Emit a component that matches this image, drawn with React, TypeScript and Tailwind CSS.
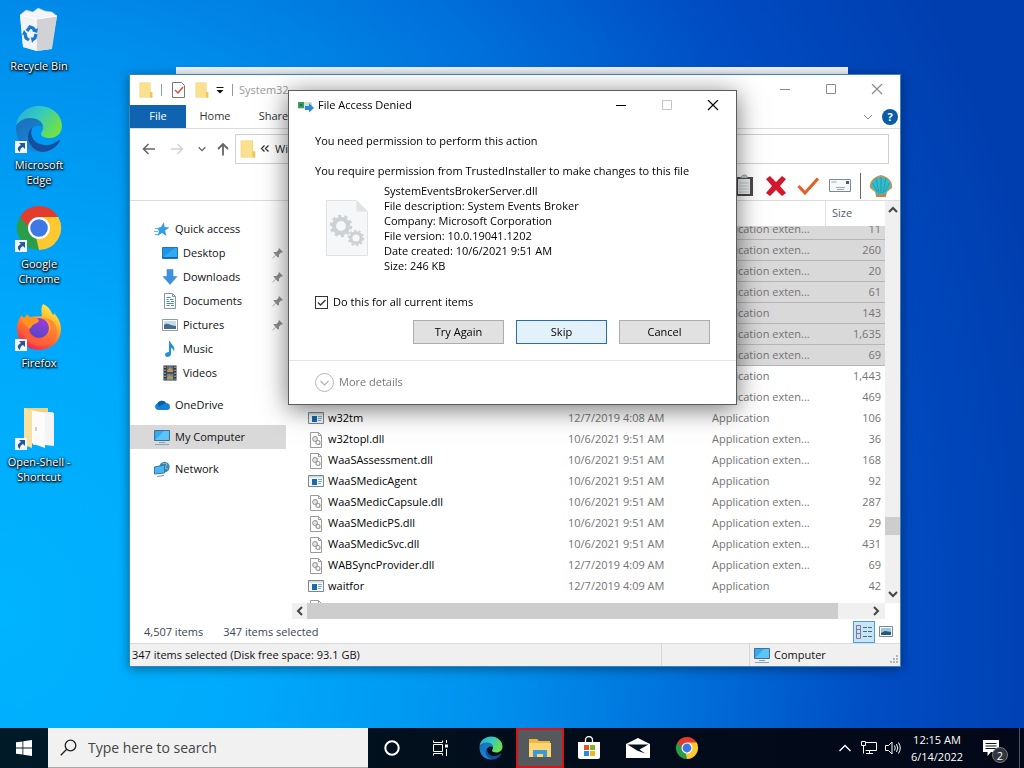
import { useLayoutEffect, useRef } from 'react'
import type { ReactNode } from 'react'

type FileRow = {
  name?: string
  date?: string
  type: string
  size: string
  selected?: boolean
}

const EXT = 'Application exten...'
const APP = 'Application'

const FILES: FileRow[] = [
  { type: EXT, size: '11', selected: true },
  { type: EXT, size: '260', selected: true },
  { type: EXT, size: '20', selected: true },
  { type: EXT, size: '61', selected: true },
  { type: APP, size: '143', selected: true },
  { type: EXT, size: '1,635', selected: true },
  { type: EXT, size: '69', selected: true },
  { type: APP, size: '1,443' },
  { type: EXT, size: '469' },
  { name: 'w32tm', date: '12/7/2019 4:08 AM', type: APP, size: '106' },
  { name: 'w32topl.dll', date: '10/6/2021 9:51 AM', type: EXT, size: '36' },
  { name: 'WaaSAssessment.dll', date: '10/6/2021 9:51 AM', type: EXT, size: '168' },
  { name: 'WaaSMedicAgent', date: '10/6/2021 9:51 AM', type: APP, size: '92' },
  { name: 'WaaSMedicCapsule.dll', date: '10/6/2021 9:51 AM', type: EXT, size: '287' },
  { name: 'WaaSMedicPS.dll', date: '10/6/2021 9:51 AM', type: EXT, size: '29' },
  { name: 'WaaSMedicSvc.dll', date: '10/6/2021 9:51 AM', type: EXT, size: '431' },
  { name: 'WABSyncProvider.dll', date: '12/7/2019 4:09 AM', type: EXT, size: '69' },
  { name: 'waitfor', date: '12/7/2019 4:09 AM', type: APP, size: '42' },
  { name: 'WalletBackgroundServiceProxy.dll', date: '12/7/2019 4:08 AM', type: EXT, size: '13' },
]

const DETAILS = [
  'SystemEventsBrokerServer.dll',
  'File description: System Events Broker',
  'Company: Microsoft Corporation',
  'File version: 10.0.19041.1202',
  'Date created: 10/6/2021 9:51 AM',
  'Size: 246 KB',
]

/* ---------- logos ---------- */

function EdgeLogo({ className, id }: { className: string; id: string }) {
  return (
    <svg viewBox="0 0 48 48" className={className} aria-hidden="true">
      <defs>
        <linearGradient id={id + 'a'} x1="0" y1="0" x2="1" y2="0.5">
          <stop offset="0" stopColor="#27a9dd" />
          <stop offset="0.5" stopColor="#33c9c0" />
          <stop offset="1" stopColor="#6fe04a" />
        </linearGradient>
        <linearGradient id={id + 'b'} x1="0" y1="0" x2="0.6" y2="1">
          <stop offset="0" stopColor="#1b6fb8" />
          <stop offset="1" stopColor="#1487dd" />
        </linearGradient>
      </defs>
      <path d="M1 20C3 8 13 1 24 1c13 0 23 9 23 20 0 7-5 12-12 12-6 0-9-2-9-4 0-1.500 2-2.500 2-6 0-5-5-9-12-9-6 0-12 2-15 6z" fill={`url(#${id}a)`} />
      <path d="M1 21c3-5 8-8 14-8 8 0 13 4 13 9-5-3-12 0-13 6-2 8 5 16 12 18-2 1-4 1-5 1C10 46 0 36 1 21z" fill={`url(#${id}b)`} />
      <path d="M17 23c-3 9 3 16 12 17 6 1 11-2 15-5 1-.5 1.500 0 1 1-4 7-11 11-18 11-8-1-14-8-14-15 0-4 1-7 4-9z" fill="#15509e" />
    </svg>
  )
}

function ChromeLogo({ className }: { className: string }) {
  return (
    <svg viewBox="0 0 48 48" className={className} aria-hidden="true">
      <path d="M24 24 4.900 13A22 22 0 0 1 43.100 13z" fill="#e33b2e" />
      <path d="M24 24 43.100 13A22 22 0 0 1 24 46z" fill="#fcc931" />
      <path d="M24 24v22A22 22 0 0 1 4.900 13z" fill="#2a9d4a" />
      <path d="M24 13h19.100a22 22 0 0 1 2 5L31 19z" fill="#fcc931" />
      <path d="M4.900 13 14.500 29.500 22 17z" fill="#2a9d4a" />
      <path d="M4.900 13 24 13l-5 5-5 5z" fill="#e33b2e" />
      <path d="M33.500 29.500 24 46l-3-13z" fill="#fcc931" />
      <circle cx="24" cy="24" r="11" fill="#fff" />
      <circle cx="24" cy="24" r="8.800" fill="#3c79e6" />
    </svg>
  )
}

function FirefoxLogo() {
  return (
    <svg viewBox="0 0 48 48" className="size-12" aria-hidden="true">
      <defs>
        <linearGradient id="fx" x1="0.800" y1="0" x2="0.300" y2="1">
          <stop offset="0" stopColor="#fff04a" />
          <stop offset="0.350" stopColor="#ffb52b" />
          <stop offset="0.650" stopColor="#ff6a2c" />
          <stop offset="1" stopColor="#ee2558" />
        </linearGradient>
        <linearGradient id="fxp" x1="0.700" y1="0" x2="0.300" y2="1">
          <stop offset="0" stopColor="#a03bd8" />
          <stop offset="1" stopColor="#5147c9" />
        </linearGradient>
      </defs>
      <path d="M28 1c7 3 8 8 10 11 1-1 1-1 1-2 5 5 7 11 7 16 0 12-10 21-22 21S2 38 2 26c0-6 2-11 5-14l1 4c1-1 3-2 4-5 1 2 2 3 4 3 4-1 8 0 11-1-1-5-1-9 1-12z" fill="url(#fx)" />
      <circle cx="24" cy="25" r="10" fill="url(#fxp)" />
      <path d="M7 14c2 1 5 0 9 0 4-1 7 2 8 4-2 3-4 2-6 4s-2 3-4 4c-3-5-8-5-7-12z" fill="#ff9326" />
      <path d="M12 25c0 10 12 15 20 8 4-4 4-8 3-11-1-3-3-5-7-6 7-2 14 4 14 12 0 9-8 15-17 15S8 36 8 28z" fill="#ff6a3a" opacity=".55" />
    </svg>
  )
}

function RecycleBin() {
  return (
    <svg viewBox="0 0 48 48" className="size-12" aria-hidden="true">
      <path d="m5 9 6-5 7 2 5-4 7 3 7 1 5 4-4 3H9z" fill="#f2f4f6" stroke="#b8c4cc" strokeWidth=".6" />
      <path d="m5 9 14 4 23-3-6 33-14 2-14-4z" fill="#dfe3e6" />
      <path d="m5 9 17 4v32L8 41z" fill="#f1f3f4" />
      <path d="m22 13 20-3-5 33-15 2z" fill="#d0d2d5" />
      <path d="m5 9 17 4 20-3" fill="none" stroke="#fff" strokeWidth="1.200" />
      <g fill="none" stroke="#1679d0" strokeWidth="3.200">
        <path d="m12 25 3-4 3 1 2 3" />
        <path d="m21 28-1 4-3 2" />
        <path d="m14 34-3-2-1-4" />
      </g>
      <path d="m17 25 5 2 1-5zM16 31l1 6 3-4zM7 29l5-1-3-4z" fill="#1679d0" />
    </svg>
  )
}

function OpenFolder() {
  return (
    <svg viewBox="0 0 48 48" className="size-12" aria-hidden="true">
      <path d="M9 6h24v35H9z" fill="#ecd384" />
      <path d="M18 10h20v33H18z" fill="#e9eaea" />
      <path d="m16 8 14 3v35l-14-5z" fill="#fbfbfb" />
      <path d="m9 6 8 3v37l-8-3z" fill="#f7e1a0" />
      <path d="m30 11 9 0v33l-9-1z" fill="#f4f4f4" />
      <path d="M21 25v4" stroke="#b9c0c5" strokeWidth="1.500" />
    </svg>
  )
}

function ShortcutArrow() {
  return (
    <svg viewBox="0 0 12 12" className="absolute bottom-0 left-0 size-3" aria-hidden="true">
      <path d="M0 0h12v12H0z" fill="#f4f7fa" />
      <path d="M4 2h6v6L8 6C6 7 5 8 5 11 2 9 2 6 6 4z" fill="#24579b" />
    </svg>
  )
}

/* ---------- small icons ---------- */

function Folder({ className = 'size-4' }: { className?: string }) {
  return (
    <svg viewBox="0 0 16 16" className={className} aria-hidden="true">
      <path d="M1.500.5h11v13h1.500v2H1.500z" fill="#f0cf6d" />
      <path d="M2 1h10v14H2z" fill="#fbe08f" />
      <path d="M12 10h2.500v5.500H12z" fill="#eec75a" />
    </svg>
  )
}

function Monitor() {
  return (
    <svg viewBox="0 0 16 16" className="size-4" aria-hidden="true">
      <path d="M.5 1.500h15v10H.5z" fill="#35a9ee" stroke="#3f6f96" />
      <path d="m1 11 9-9h5v9z" fill="#5dc4fa" />
      <path d="M5 13.500h6M1 15.500h14" stroke="#8ba2b3" />
    </svg>
  )
}

function DllIcon() {
  return (
    <svg viewBox="0 0 16 16" className="size-4" aria-hidden="true">
      <path d="M2.500.5h8l3 3v12h-11z" fill="#fff" stroke="#9a9a9a" />
      <path d="M10.500.5v3h3" fill="none" stroke="#9a9a9a" />
      <circle cx="7" cy="7" r="2.300" fill="none" stroke="#9b9b9b" strokeWidth="1.200" />
      <circle cx="7" cy="7" r=".6" fill="#888" />
      <circle cx="10" cy="10.500" r="2" fill="none" stroke="#9b9b9b" strokeWidth="1.200" />
    </svg>
  )
}

function AppIcon() {
  return (
    <svg viewBox="0 0 16 16" className="size-4" aria-hidden="true">
      <path d="M.5 1.500h15v11H.5z" fill="#f4f9fc" stroke="#7d868d" />
      <path d="M1 2h14v1.500H1z" fill="#cfd9df" />
      <path d="M4 5h5v6H4z" fill="#1769b0" />
      <path d="M10 5.500h4M10 7.500h4M10 9.500h3" stroke="#86a7bf" />
    </svg>
  )
}

function Pin() {
  return (
    <svg viewBox="0 0 12 12" className="size-3" aria-hidden="true">
      <path d="m7 1 4 4-1 .5-1 0-2 2 0 2.500-1 .5L3.800 8.200 1 11.500l-.5-.5L3.500 8 1.500 5.500 2 5h2.500l2-2V2z" fill="#8d9195" />
    </svg>
  )
}

function Chevron({ d, className = 'size-3' }: { d: string; className?: string }) {
  return (
    <svg viewBox="0 0 12 12" className={className} fill="none" stroke="currentColor" aria-hidden="true">
      <path d={d} />
    </svg>
  )
}

const UP = 'M2 8l4-4 4 4'
const DOWN = 'M2 4l4 4 4-4'
const LEFT = 'M8 2 4 6l4 4'
const RIGHT = 'M4 2l4 4-4 4'

const sideIcons: Record<string, ReactNode> = {
  'Quick access': (
    <>
      <path d="m10 1 .5 5 5 .5-4.500 3 1.500 5.500-4.500-3-4.500 3 1.500-5L3 7l4-1z" fill="#2f9fe0" />
      <path d="M1 7.500h4M0 10.500h4M1 13.500h3" stroke="#5cb4ea" />
    </>
  ),
  Desktop: (
    <>
      <path d="M.5 2.500h15v11H.5z" fill="#1b95e8" stroke="#1b76bd" />
      <path d="m1 12 12-9h2v9z" fill="#33a8f3" />
      <path d="M1 12.500h14" stroke="#1268ad" />
    </>
  ),
  Downloads: <path d="M5 .5h6v7h4l-7 8-7-8h4z" fill="#3c93dd" stroke="#2f7dc3" strokeWidth=".5" />,
  Documents: (
    <>
      <path d="M2.500.5h8l3 3v12h-11z" fill="#fff" stroke="#89959c" />
      <path d="M10.500.5v3h3" fill="none" stroke="#89959c" />
      <path d="M4.500 4.500h4M4.500 6.500h2M8 6.500h3.500M4.500 8.500h3M9 8.500h3M4.500 10.500h7M4.500 12.500h3M9 12.500h3" stroke="#3d92a9" />
    </>
  ),
  Pictures: (
    <>
      <path d="M.5 2.500h15v11H.5z" fill="#fff" stroke="#929ba1" />
      <path d="M2 4h12v8H2z" fill="#c5dcf0" />
      <path d="M2 8c3-3 5 0 12 1v3H2z" fill="#456b87" />
    </>
  ),
  Music: (
    <path d="M8 0c1 4 6 5 4 11-.3-3-2-4-3-4v6c0 2-2 3-3.500 3S3 15 3 13.500 5 11 7 11V0z" fill="#1f93d3" />
  ),
  Videos: (
    <>
      <path d="M1.500.5h13v15h-13z" fill="#2b3034" />
      <path d="M4.500 1h7v6.500h-7z" fill="#4e7188" />
      <path d="M4.500 8.500h7V15h-7z" fill="#6485a0" />
      <path d="m5 6 3-4 3 3v2H5zM5 14l2-4 4 2v2z" fill="#c3914b" />
      <path d="M3 1.500v13M13 1.500v13" stroke="#e5e8e9" strokeDasharray="1.500 1.500" />
    </>
  ),
  OneDrive: (
    <>
      <path d="M4 13a3.500 3.500 0 0 1-.5-6.800A5 5 0 0 1 12 6c3 0 4 2 4 4s-1 3-3 3z" fill="#1581d8" />
      <path d="M3.500 6.200A5 5 0 0 1 12 6L5 9.500z" fill="#0b5cad" />
    </>
  ),
  Network: (
    <>
      <circle cx="10.500" cy="6" r="5.200" fill="#3b87b2" />
      <path d="M8 2c2 1 3 0 5 1l-2 4 3 1" fill="none" stroke="#83c2dc" />
      <path d="m.5 6 10-2v8l-10 1z" fill="#4bb7f2" stroke="#35779f" />
      <path d="m3 15.500 7-1" stroke="#7292a5" />
    </>
  ),
}

function SideItem({ label, nested, pinned, active }: { label: string; nested?: boolean; pinned?: boolean; active?: boolean }) {
  return (
    <a
      href="#"
      className={`flex h-6 items-center gap-[5px] pr-0.5 ${nested ? 'pl-8' : 'pl-6'} ${active ? 'bg-[#d9d9d9]' : ''}`}
    >
      {label === 'My Computer' ? (
        <Monitor />
      ) : (
        <svg viewBox="0 0 16 16" className="size-4" aria-hidden="true">
          {sideIcons[label]}
        </svg>
      )}
      <span className="flex-1">{label}</span>
      {pinned && <Pin />}
    </a>
  )
}

function DesktopIcon({ label, shortcut, children }: { label: string; shortcut?: boolean; children: ReactNode }) {
  return (
    <a href="#" className="flex h-[99px] w-20 flex-col items-center gap-1 text-center text-white">
      <span className="relative">
        {children}
        {shortcut && <ShortcutArrow />}
      </span>
      <span className="whitespace-pre-line leading-[15px] [text-shadow:0_1px_2px_#000,1px_1px_2px_#000,0_0_3px_#000]">{label}</span>
    </a>
  )
}

function WindowControls({ muted }: { muted?: boolean }) {
  const tone = muted ? 'text-[#8a8a8a]' : 'text-black'
  return (
    <div className={`ml-auto flex h-full ${tone}`}>
      <button aria-label="Minimize" className="grid w-[46px] place-items-center">
        <svg viewBox="0 0 12 12" className="size-3" stroke="currentColor"><path d="M1 5.500h10" /></svg>
      </button>
      <button aria-label="Maximize" className={`grid w-[46px] place-items-center ${muted ? '' : 'text-[#c4c4c4]'}`}>
        <svg viewBox="0 0 12 12" className="size-3" fill="none" stroke="currentColor"><path d="M1.500.5h9v9h-9z" /></svg>
      </button>
      <button aria-label="Close" className="grid w-[46px] place-items-center">
        <svg viewBox="0 0 12 12" className="size-3" stroke="currentColor" strokeWidth="1.200"><path d="m1 0 10 10M11 0 1 10" /></svg>
      </button>
    </div>
  )
}

function FileList() {
  const scroller = useRef<HTMLDivElement>(null)

  useLayoutEffect(() => {
    if (scroller.current) scroller.current.scrollTop = 7
  }, [])

  return (
    <div className="flex min-w-0 flex-1 flex-col">
      <div className="flex min-h-0 flex-1">
        <div ref={scroller} className="min-w-0 flex-1 overflow-hidden">
          <table className="w-full table-fixed border-separate border-spacing-0 text-[#747474]">
            <thead>
              <tr className="h-[25px] text-left text-[#56606b]">
                <th className="sticky top-0 w-[270px] bg-white" aria-label="Name" />
                <th className="sticky top-0 w-36 bg-white" aria-label="Date modified" />
                <th className="sticky top-0 bg-white" aria-label="Type" />
                <th className="sticky top-0 w-[60px] border-l border-[#e2e2e2] bg-white pl-1.5 font-normal">Size</th>
              </tr>
            </thead>
            <tbody>
              {FILES.map((f, i) => (
                <tr
                  key={i}
                  className={f.selected ? 'h-[21px] bg-[#d9d9d9] [&>td]:border-b [&>td]:border-[#b5b5b5]' : 'h-[21px]'}
                >
                  <td className="p-0">
                    {f.name && (
                      <span className="flex items-center gap-1 pl-4 text-black">
                        {f.name.endsWith('.dll') ? <DllIcon /> : <AppIcon />}
                        {f.name}
                      </span>
                    )}
                  </td>
                  <td className="whitespace-nowrap p-0 pl-1.5">{f.date}</td>
                  <td className="whitespace-nowrap p-0 pl-1.5">{f.type}</td>
                  <td className="p-0 pr-1 text-right">{f.size}</td>
                </tr>
              ))}
            </tbody>
          </table>
        </div>
        <div className="flex w-[15px] flex-col items-center justify-between bg-[#f0f0f0] py-[3px] text-[#444]">
          <Chevron d={UP} className="size-3 stroke-2" />
          <div className="mt-auto mb-[53px] h-[18px] w-full bg-[#cdcdcd]" />
          <Chevron d={DOWN} className="size-3 stroke-2" />
        </div>
      </div>
      <div className="mr-[15px] flex h-4 items-center justify-between bg-[#f0f0f0] pr-[3px] text-[#444]">
        <span className="grid w-[15px] place-items-center"><Chevron d={LEFT} className="size-3 stroke-2" /></span>
        <div className="mr-auto h-full w-[531px] bg-[#cdcdcd]" />
        <Chevron d={RIGHT} className="size-3 stroke-2" />
      </div>
    </div>
  )
}

function ExplorerWindow() {
  return (
    <section
      aria-label="System32"
      className="absolute left-[129px] top-[74px] flex h-[593px] w-[772px] flex-col border border-[#3b86b8] bg-white shadow-[0_2px_10px_rgba(0,0,0,0.4)]"
    >
      <header className="flex h-[30px] shrink-0 items-center pl-2 text-[#999]">
        <Folder />
        <span className="ml-[7px] h-3 w-px bg-[#999]" />
        <svg viewBox="0 0 16 16" className="ml-2 size-4" fill="none" aria-hidden="true">
          <path d="M2.500.5h9l3 3v12h-12z" fill="#fff" stroke="#777" />
          <path d="m5 8 3 3 5-6" stroke="#dd4a3c" strokeWidth="1.500" />
        </svg>
        <Folder className="ml-2 size-4" />
        <svg viewBox="0 0 12 12" className="ml-1 size-3" aria-hidden="true">
          <path d="M2.500 3.500h7" stroke="#111" />
          <path d="M2.500 6h7L6 9.500z" fill="#111" />
        </svg>
        <span className="ml-1.5 h-3 w-px bg-[#999]" />
        <h1 className="ml-1.5">System32</h1>
        <WindowControls muted />
      </header>

      <nav className="flex h-6 shrink-0 items-center border-b border-[#dcdcdc] text-[#333]">
        <button className="h-full w-14 bg-[#0f63b0] text-white">File</button>
        <button className="w-[58px]">Home</button>
        <button className="w-[59px]">Share</button>
        <span className="ml-auto mr-2 text-[#888]"><Chevron d={DOWN} /></span>
        <button className="mr-0.5 grid size-4 place-items-center rounded-full bg-[#0a5ca8] font-bold text-white" aria-label="Help">?</button>
      </nav>

      <div className="flex h-10 shrink-0 items-center pl-[11px] pr-[11px] text-[#666]">
        <svg viewBox="0 0 16 16" className="size-4" fill="none" stroke="currentColor" strokeWidth="1.600" aria-label="Back">
          <path d="M14 8H2.500M7.500 3l-5 5 5 5" />
        </svg>
        <svg viewBox="0 0 16 16" className="ml-3 size-4 text-[#d0d0d0]" fill="none" stroke="currentColor" strokeWidth="1.400" aria-label="Forward">
          <path d="M2 8h11.500M8.500 3l5 5-5 5" />
        </svg>
        <Chevron d={DOWN} className="ml-3 size-2.5 stroke-[1.6px]" />
        <svg viewBox="0 0 16 16" className="ml-2 size-4" fill="none" stroke="currentColor" strokeWidth="1.800" aria-label="Up">
          <path d="M8 14.500V3M3 8l5-5 5 5" />
        </svg>
        <div className="ml-1 flex h-[30px] flex-1 items-center gap-0.5 border border-[#d0d0d0] pl-[3px] text-[#222]">
          <Folder className="size-[18px]" />
          <svg viewBox="0 0 12 12" className="size-3" fill="none" stroke="#333" strokeWidth="1.300" aria-hidden="true">
            <path d="M5.500 2.500 2.500 5.500l3 3M9.500 2.500 6.500 5.500l3 3" />
          </svg>
          <span className="pl-0.5">Windows</span>
        </div>
      </div>

      <div className="flex h-8 shrink-0 items-center justify-end gap-2 border-b border-[#dcdcdc] pr-[7px] pt-0.5">
        <svg viewBox="0 0 24 24" className="size-6" aria-hidden="true">
          <path d="M4 3h17v19H4z" fill="#4a4a4a" />
          <path d="M6 5h12v15H6z" fill="#eceeee" />
          <path d="M8 4h8l-2-3h-3z" fill="#c9cbcc" stroke="#777" strokeWidth=".6" />
          <path d="M7 9h10M7 12h10M7 15h10M7 18h10" stroke="#b9c0c4" strokeWidth=".8" />
        </svg>
        <svg viewBox="0 0 24 24" className="size-6" aria-hidden="true">
          <path d="M2 5l4-3 6 6 6-6 4 3-6 7 6 7-4 3-6-6-6 6-4-3 6-7z" fill="#d3172c" />
        </svg>
        <svg viewBox="0 0 24 24" className="size-6" fill="none" aria-hidden="true">
          <path d="M2.500 12 9 19 22 4.500" stroke="#e0622b" strokeWidth="3.200" />
        </svg>
        <svg viewBox="0 0 24 24" className="size-6" fill="none" aria-hidden="true">
          <path d="M1.500 5.500h21v12h-21z" fill="#f6f8f9" stroke="#7d8790" />
          <path d="M8 13.500h9M9 15.500h7M3.500 8h5" stroke="#9aa5ad" />
          <path d="M18 7h3v3h-3z" fill="#3c5c86" />
        </svg>
        <span className="h-[26px] w-px bg-[#666]" />
        <svg viewBox="0 0 24 24" className="size-6" aria-hidden="true">
          <path d="M6 18 1 14C0 9 3 3 12 1c9 2 12 8 11 13l-5 4-1 4H7z" fill="#c99550" />
          <path d="M7 18 2.500 13C2 9 4 4 12 3c8 1 10 6 9.500 10L17 18l-1 3H8z" fill="#33bdca" />
          <path d="M12 19V3M10 19 7 4M14 19l3-15M8.500 18 3.500 9M15.500 18l5-9" stroke="#1d8ea5" strokeWidth=".7" />
          <path d="M7 20h10v3H7z" fill="#ba8a55" />
        </svg>
      </div>

      <div className="flex min-h-0 flex-1">
        <aside className="flex w-[156px] shrink-0 flex-col gap-2 pt-4 text-[#111]">
          <div>
            <SideItem label="Quick access" />
            <SideItem label="Desktop" nested pinned />
            <SideItem label="Downloads" nested pinned />
            <SideItem label="Documents" nested pinned />
            <SideItem label="Pictures" nested pinned />
            <SideItem label="Music" nested />
            <SideItem label="Videos" nested />
          </div>
          <SideItem label="OneDrive" />
          <SideItem label="My Computer" active />
          <SideItem label="Network" />
        </aside>
        <div className="w-1.5 shrink-0" />
        <FileList />
      </div>

      <div className="flex h-6 shrink-0 items-center gap-5 pl-3.5 pr-[3px] pt-0.5 text-[#3c4654]">
        <span>4,507 items</span>
        <span>347 items selected</span>
        <span className="ml-auto flex items-center">
          <button aria-label="Details view" className="grid size-[22px] place-items-center border border-[#4aa3d4] bg-[#c6e6f7]">
            <svg viewBox="0 0 18 16" className="h-4 w-[18px]" fill="none" aria-hidden="true">
              <path d="M1.500 1.500h4v13h-4zM1.500 5.500h4M1.500 9.500h4" stroke="#8a7396" />
              <path d="M8 3.500h4M13 3.500h4M8 7.500h4M13 7.500h4M8 12.500h4M13 12.500h4" stroke="#486d83" />
            </svg>
          </button>
          <button aria-label="Thumbnail view" className="grid size-[22px] place-items-center">
            <svg viewBox="0 0 16 16" className="size-4" aria-hidden="true">
              <path d="M1.500 2.500h13v10h-13z" fill="#fff" stroke="#788799" />
              <path d="M3 4h10v7H3z" fill="#9ac7e2" />
              <path d="m3 9 4-2 6 1v3H3z" fill="#2b5a70" />
            </svg>
          </button>
        </span>
      </div>

      <footer className="flex h-[23px] shrink-0 items-center border-t border-[#dadada] bg-[#f0f0f0] text-[#111]">
        <span className="flex-1 pl-0.5">347 items selected (Disk free space: 93.1 GB)</span>
        <span className="h-full w-[89px] border-x border-[#d6d6d6]" />
        <span className="flex w-[150px] items-center gap-1 pl-1">
          <Monitor />
          Computer
          <svg viewBox="0 0 12 12" className="ml-auto mt-2 size-3 fill-[#b5b5b5]" aria-hidden="true">
            <path d="M8 2h2v2H8zM5 5h2v2H5zM8 5h2v2H8zM2 8h2v2H2zM5 8h2v2H5zM8 8h2v2H8z" />
          </svg>
        </span>
      </footer>
    </section>
  )
}

function Gear({ x, y, r }: { x: number; y: number; r: number }) {
  return (
    <g transform={`translate(${x} ${y})`} fill="none" stroke="#cdd1d4">
      <circle r={r * 0.65} strokeWidth={r * 0.4} />
      <circle r={r * 0.9} strokeWidth={r * 0.25} strokeDasharray={`${r * 0.28} ${r * 0.285}`} />
    </g>
  )
}

function AccessDeniedDialog() {
  const button = 'h-6 w-[91px] border border-[#adadad] bg-[#e1e1e1]'
  return (
    <section
      role="dialog"
      aria-label="File Access Denied"
      className="absolute left-[288px] top-[90px] flex w-[449px] flex-col border border-[#5c5c5c] bg-white text-black shadow-[0_4px_24px_rgba(0,0,0,0.55)]"
    >
      <header className="flex h-[29px] items-center gap-1 pl-[9px]">
        <svg viewBox="0 0 16 16" className="size-4" aria-hidden="true">
          <path d="M0 4h14v7H0z" fill="#cfe0d4" />
          <path d="M0 4h6v6H0z" fill="#3c9a5c" />
          <path d="M2 6h2v2H2z" fill="#1d6b3c" />
          <path d="M7 8h4V5l5 5-5 4.500V12H7z" fill="#2e86dc" />
        </svg>
        <h2>File Access Denied</h2>
        <WindowControls />
      </header>

      <div className="flex flex-col px-[26px] pb-4 pt-[13px]">
        <p className="leading-[15px]">You need permission to perform this action</p>
        <p className="mt-[15px] leading-[15px]">You require permission from TrustedInstaller to make changes to this file</p>
        <div className="mt-[5px] flex items-center gap-[15px] pl-2.5">
          <svg viewBox="0 0 44 58" className="h-[58px] w-11" aria-hidden="true">
            <path d="M1.500 1.500h30l11 11v44h-41z" fill="#f5f7f8" stroke="#e0e3e5" />
            <path d="M31.500 1.500v11h11z" fill="#e0e4e6" />
            <Gear x={16} y={27} r={11} />
            <Gear x={31} y={39} r={8} />
          </svg>
          <ul className="leading-[15px]">
            {DETAILS.map((line) => (
              <li key={line}>{line}</li>
            ))}
          </ul>
        </div>
        <label className="mt-[22px] flex h-[15px] items-center gap-[5px]">
          <span className="grid">
            <input
              type="checkbox"
              defaultChecked
              className="peer col-start-1 row-start-1 size-[13px] appearance-none border border-[#333] bg-white"
            />
            <svg
              viewBox="0 0 13 13"
              className="pointer-events-none invisible col-start-1 row-start-1 size-[13px] peer-checked:visible"
              fill="none"
              stroke="#333"
              strokeWidth="1.300"
              aria-hidden="true"
            >
              <path d="m3 6.500 2.500 2.500L10.500 4" />
            </svg>
          </span>
          Do this for all current items
        </label>
        <div className="mt-2.5 flex justify-end gap-3">
          <button className={button}>Try Again</button>
          <button className="h-6 w-[91px] border border-[#2a6ea5] bg-[#e3f1fb]">Skip</button>
          <button className={button}>Cancel</button>
        </div>
      </div>

      <footer className="flex h-11 items-center border-t border-[#e4e4e4] pl-[26px] text-[#777]">
        <button className="flex items-center gap-[5px]">
          <svg viewBox="0 0 19 19" className="size-[19px]" fill="none" stroke="#b8b8b8" aria-hidden="true">
            <circle cx="9.500" cy="9.500" r="9" />
            <path d="m5.500 8 4 4 4-4" strokeWidth="1.400" />
          </svg>
          More details
        </button>
      </footer>
    </section>
  )
}

function Taskbar() {
  const cell = 'grid h-full w-12 place-items-center'
  return (
    <footer className="flex h-10 shrink-0 items-center bg-linear-to-r from-[#001a28] via-[#020d1a] to-[#020818] text-white">
      <button aria-label="Start" className={cell}>
        <svg viewBox="0 0 16 16" className="size-4" fill="#fff" aria-hidden="true">
          <path d="m0 2.300 6.500-.9v6.200H0zM7.300 1.300 16 0v7.600H7.300zM0 8.400h6.500v6.200L0 13.700zM7.300 8.400H16V16l-8.700-1.300z" />
        </svg>
      </button>
      <label className="flex h-full w-80 items-center gap-[11px] border-b border-[#aaa] bg-[#f1f1f1] pl-3">
        <svg viewBox="0 0 17 17" className="size-[17px]" fill="none" stroke="#222" strokeWidth="1.300" aria-hidden="true">
          <circle cx="10.500" cy="6.500" r="5.300" />
          <path d="M6.700 10.300.8 16.200" />
        </svg>
        <input
          aria-label="Search"
          placeholder="Type here to search"
          className="min-w-0 flex-1 bg-transparent text-[14px] text-black outline-none placeholder:text-[#444]"
        />
      </label>
      <button aria-label="Cortana" className={cell}>
        <svg viewBox="0 0 16 16" className="size-4" fill="none" stroke="#fff" strokeWidth="2" aria-hidden="true">
          <circle cx="8" cy="8" r="6.700" />
        </svg>
      </button>
      <button aria-label="Task view" className={cell}>
        <svg viewBox="0 0 17 16" className="h-4 w-[17px]" fill="none" stroke="#fff" aria-hidden="true">
          <path d="M1.500.5v2h9v-2M1.500 15.500v-2h9v2M1.500 4.500h9v7h-9zM14.500 0v3M14.500 9v7" />
          <path d="M13 4.500h3v3h-3z" fill="#fff" stroke="none" />
        </svg>
      </button>
      <div className="flex h-full gap-px pl-[3px]">
        <button aria-label="Microsoft Edge" className={cell}><EdgeLogo className="size-6" id="tb" /></button>
        <button aria-label="File Explorer" className={`${cell} border-2 border-[#d81414] bg-[#55585c]`}>
          <svg viewBox="0 0 24 20" className="h-5 w-6" aria-hidden="true">
            <path d="M1 1h8l2 2h11v16H1z" fill="#eeb53f" />
            <path d="M1 5h22v14H1z" fill="#fcd672" />
            <path d="M5 19v-7h14v7h-4v-3H9v3z" fill="#3f9bd5" />
          </svg>
        </button>
        <button aria-label="Microsoft Store" className={cell}>
          <svg viewBox="0 0 24 24" className="size-6" aria-hidden="true">
            <path d="M8.500 7V4a3.500 3.500 0 0 1 7 0v3" fill="none" stroke="#fff" strokeWidth="1.300" />
            <path d="M1 6h22v15q0 2-2 2H3q-2 0-2-2z" fill="#fff" />
            <path d="M7 9h5v5H7z" fill="#e8502b" />
            <path d="M13 9h5v5h-5z" fill="#7db52c" />
            <path d="M7 15h5v5H7z" fill="#2a8fd6" />
            <path d="M13 15h5v5h-5z" fill="#f5b41c" />
          </svg>
        </button>
        <button aria-label="Mail" className={cell}>
          <svg viewBox="0 0 24 20" className="h-5 w-6" aria-hidden="true">
            <path d="M0 6 12 0l12 6v14H0z" fill="#fff" />
            <path d="m1.500 6.500 21 0-9 5 5.500 4-8-3z" fill="#08121f" />
          </svg>
        </button>
        <button aria-label="Google Chrome" className={cell}><ChromeLogo className="size-6" /></button>
      </div>

      <div className="ml-auto flex h-full items-center">
        <button aria-label="Show hidden icons" className="grid w-6 place-items-center">
          <svg viewBox="0 0 14 14" className="size-3.5" fill="none" stroke="#fff" strokeWidth="1.300"><path d="m1.500 10 5.500-5.500 5.500 5.500" /></svg>
        </button>
        <button aria-label="Network" className="grid w-6 place-items-center">
          <svg viewBox="0 0 18 16" className="h-4 w-[18px]" fill="none" stroke="#fff">
            <path d="M5.500 2.500h11v8h-11M9.500 10.500v3M6 13.500h7M1.500 1.500h4v4h-4zM3.500 5.500v8" />
          </svg>
        </button>
        <button aria-label="Volume" className="grid w-6 place-items-center">
          <svg viewBox="0 0 18 16" className="h-4 w-[18px]" fill="none" stroke="#fff">
            <path d="M1.500 5.500h3l3.500-3.500v12l-3.500-3.500h-3zM10.500 5.500q1.500 2.500 0 5M12.500 4q2.500 4 0 8M14.500 2.500q3.500 5.500 0 11" />
          </svg>
        </button>
        <time className="w-16 text-center leading-[17px]">
          12:15 AM
          <br />
          6/14/2022
        </time>
        <button aria-label="Notifications" className="grid w-11 place-items-center">
          <span className="relative">
            <svg viewBox="0 0 18 18" className="size-[18px]" aria-hidden="true">
              <path d="M1 1h16v12H9l-3.500 4v-4H1z" fill="#fff" />
              <path d="M3.500 4.500h11M3.500 7h11M3.500 9.500h11" stroke="#0b1622" strokeWidth="1.100" />
            </svg>
            <span className="absolute -bottom-1.5 -right-2 grid size-4 place-items-center rounded-full border border-[#777] bg-[#30363d] text-[11px]">2</span>
          </span>
        </button>
        <span className="ml-1.5 mr-1 h-full w-px bg-[#4b5563]" />
      </div>
    </footer>
  )
}

export default function App() {
  return (
    <div className="flex h-screen flex-col overflow-hidden bg-[radial-gradient(105%_160%_at_0%_80%,#00b4ff_0%,#00a8fb_25%,#0092ee_45%,#0074dc_62%,#004cc2_82%,#003eb0_100%)] font-['Open_Sans','Noto_Sans',sans-serif] text-[11px]">
      <main className="relative min-h-0 flex-1">
        <nav aria-label="Desktop" className="flex w-[78px] flex-col items-center pt-1.5">
          <DesktopIcon label="Recycle Bin"><RecycleBin /></DesktopIcon>
          <DesktopIcon label={'Microsoft\nEdge'} shortcut><EdgeLogo className="size-12" id="dt" /></DesktopIcon>
          <DesktopIcon label={'Google\nChrome'} shortcut><ChromeLogo className="size-12" /></DesktopIcon>
          <DesktopIcon label="Firefox" shortcut><FirefoxLogo /></DesktopIcon>
          <DesktopIcon label={'Open-Shell -\nShortcut'} shortcut><OpenFolder /></DesktopIcon>
        </nav>
        <div className="absolute left-44 top-[67px] h-20 w-[672px] bg-[#eef1f5] shadow-md" />
        <ExplorerWindow />
        <AccessDeniedDialog />
      </main>
      <Taskbar />
    </div>
  )
}
